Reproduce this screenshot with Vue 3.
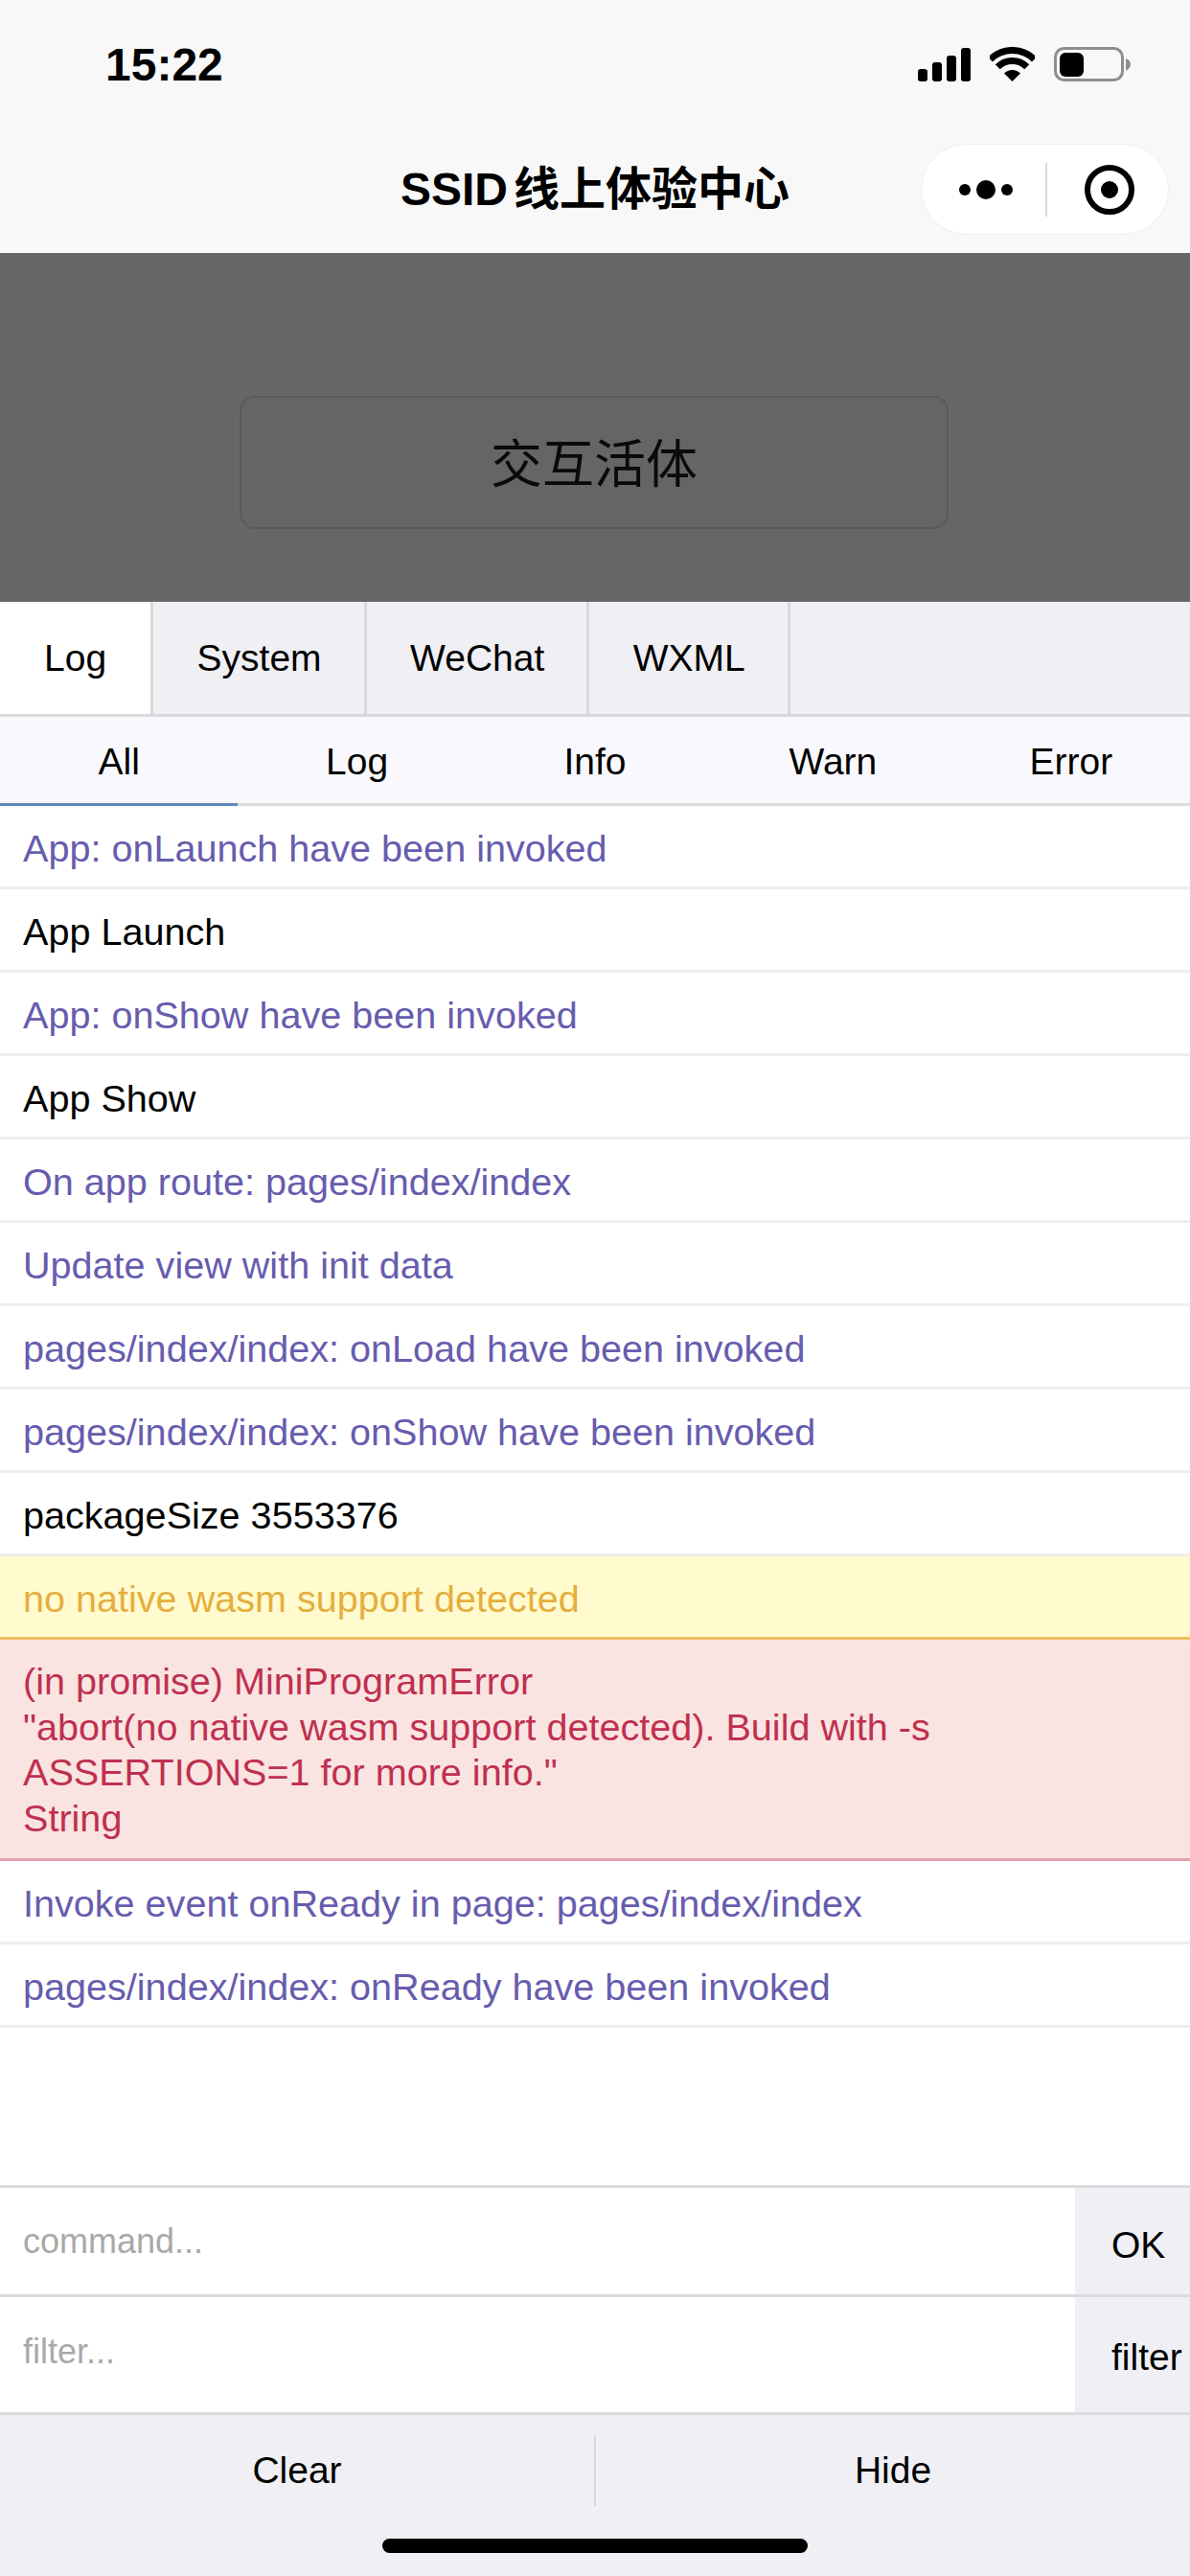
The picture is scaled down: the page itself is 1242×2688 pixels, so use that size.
<script setup>
const mainTabs = ['Log', 'System', 'WeChat', 'WXML']
const subTabs = ['All', 'Log', 'Info', 'Warn', 'Error']
const logs = [
  { kind: 'info', lines: ['App: onLaunch have been invoked'] },
  { kind: 'log', lines: ['App Launch'] },
  { kind: 'info', lines: ['App: onShow have been invoked'] },
  { kind: 'log', lines: ['App Show'] },
  { kind: 'info', lines: ['On app route: pages/index/index'] },
  { kind: 'info', lines: ['Update view with init data'] },
  { kind: 'info', lines: ['pages/index/index: onLoad have been invoked'] },
  { kind: 'info', lines: ['pages/index/index: onShow have been invoked'] },
  { kind: 'log', lines: ['packageSize 3553376'] },
  { kind: 'warn', lines: ['no native wasm support detected'] },
  {
    kind: 'error',
    lines: [
      '(in promise) MiniProgramError',
      '"abort(no native wasm support detected). Build with -s',
      'ASSERTIONS=1 for more info."',
      'String'
    ]
  },
  { kind: 'info', lines: ['Invoke event onReady in page: pages/index/index'] },
  { kind: 'info', lines: ['pages/index/index: onReady have been invoked'] }
]
</script>

<template>
  <div class="screen">
    <header class="top">
      <div class="status">
        <span class="time">15:22</span>
        <div class="status-icons">
          <svg class="signal" width="55" height="35" viewBox="0 0 55 35">
            <rect x="0" y="22" width="10" height="13" rx="3" />
            <rect x="15" y="15" width="10" height="20" rx="3" />
            <rect x="30" y="8" width="10" height="27" rx="3" />
            <rect x="45" y="0" width="10" height="35" rx="3" />
          </svg>
          <svg class="wifi" width="47" height="36" viewBox="0 0 47 36">
            <path d="M0.5 13A32.5 32.5 0 0 1 46.5 13" fill="none" stroke="#000" stroke-width="7" />
            <path d="M8.3 20.8A21.5 21.5 0 0 1 38.7 20.8" fill="none" stroke="#000" stroke-width="7" />
            <path d="M23.5 36L15 27.5A12 12 0 0 1 32 27.5Z" />
          </svg>
          <svg class="battery" width="80" height="36" viewBox="0 0 80 36">
            <rect x="1.5" y="1.5" width="70" height="33" rx="9" fill="none" stroke="#8e8e8e" stroke-width="3" />
            <rect x="6" y="6" width="25" height="25" rx="6" />
            <path d="M75 12C78 13 80 15 80 18C80 21 78 23 75 25Z" fill="#8e8e8e" />
          </svg>
        </div>
      </div>
      <div class="nav">
        <div class="title"><span class="title-latin">SSID</span>线上体验中心</div>
        <div class="capsule">
          <svg width="58" height="24" viewBox="0 0 58 24" class="dots">
            <circle cx="6" cy="12" r="6" />
            <circle cx="28" cy="12" r="10" />
            <circle cx="50" cy="12" r="6" />
          </svg>
          <span class="capsule-line"></span>
          <svg width="52" height="52" viewBox="0 0 52 52" class="target">
            <circle cx="26" cy="26" r="23" fill="none" stroke="#000" stroke-width="6" />
            <circle cx="26" cy="26" r="9" />
          </svg>
        </div>
      </div>
    </header>

    <section class="stage">
      <div class="stage-button">交互活体</div>
    </section>

    <nav class="main-tabs">
      <div v-for="(t, i) in mainTabs" :key="t" class="main-tab" :class="{ active: i === 0 }">{{ t }}</div>
    </nav>

    <nav class="sub-tabs">
      <div v-for="(t, i) in subTabs" :key="t" class="sub-tab" :class="{ active: i === 0 }">{{ t }}</div>
    </nav>

    <main class="logs">
      <div v-for="(row, i) in logs" :key="i" class="row" :class="row.kind">
        <div v-for="line in row.lines" :key="line">{{ line }}</div>
      </div>
    </main>

    <div class="cmd cmd-a">
      <div class="cmd-input">command...</div>
      <div class="cmd-btn">OK</div>
    </div>
    <div class="cmd cmd-b">
      <div class="cmd-input">filter...</div>
      <div class="cmd-btn">filter</div>
    </div>

    <footer class="footer">
      <div class="actions">
        <div class="action">Clear</div>
        <span class="action-line"></span>
        <div class="action">Hide</div>
      </div>
      <div class="home"></div>
    </footer>
  </div>
</template>

<style scoped>
.screen {
  width: 1242px;
  height: 2688px;
  display: flex;
  flex-direction: column;
  overflow: hidden;
  background: #fff;
  color: #000;
  font-family: "Liberation Sans", "Noto Sans CJK SC", sans-serif;
  font-size: 39px;
}
.top {
  height: 264px;
  flex: none;
  background: #f8f8f8;
  display: flex;
  flex-direction: column;
}
.status {
  height: 136px;
  padding: 42px 62px 0 110px;
  box-sizing: border-box;
  display: flex;
  justify-content: space-between;
  align-items: flex-start;
}
.time {
  font-size: 48px;
  font-weight: 700;
  line-height: 52px;
}
.status-icons {
  display: flex;
  align-items: flex-start;
  padding-top: 7px;
}
.signal {
  margin-top: 1px;
  margin-right: 20px;
}
.wifi {
  margin-right: 20px;
}
.nav {
  flex: 1;
  position: relative;
  display: flex;
  justify-content: center;
}
.title {
  font-size: 48px;
  font-weight: 700;
  line-height: 56px;
  margin-top: 34px;
}
.title-latin {
  margin-right: 6px;
}
.capsule {
  position: absolute;
  left: 961px;
  top: 14px;
  width: 259px;
  height: 95px;
  box-sizing: border-box;
  border: 1px solid #eeeeee;
  border-radius: 48px;
  background: #fff;
  display: flex;
  align-items: center;
}
.dots {
  margin-left: 39px;
}
.capsule-line {
  width: 2px;
  height: 56px;
  background: #d8d8d8;
  margin-left: 32px;
}
.target {
  margin-left: 39px;
}
.stage {
  height: 364px;
  flex: none;
  background: #666;
  padding: 149px 252px 0 250px;
  box-sizing: border-box;
}
.stage-button {
  height: 139px;
  box-sizing: border-box;
  border: 2px solid #5a5a5a;
  border-radius: 16px;
  background: #656565;
  font-size: 54px;
  color: #0a0a0a;
  padding-bottom: 5px;
  display: flex;
  align-items: center;
  justify-content: center;
}
.main-tabs {
  height: 120px;
  flex: none;
  display: flex;
  box-sizing: border-box;
  background: #efeff4;
  border-bottom: 3px solid #d9d9dc;
}
.main-tab {
  padding: 0 44px 0 45.5px;
  display: flex;
  align-items: center;
  border-right: 3px solid #d9d9dc;
}
.main-tab.active {
  background: #fff;
  padding: 0 46px;
}
.sub-tabs {
  height: 93px;
  flex: none;
  display: flex;
  box-sizing: border-box;
  background: #f9f9fd;
  border-bottom: 3px solid #dcdcdf;
}
.sub-tab {
  flex: 1;
  height: 93px;
  box-sizing: border-box;
  display: flex;
  align-items: center;
  justify-content: center;
}
.sub-tab.active {
  padding-top: 3px;
  border-bottom: 3px solid #5f87bd;
}
.logs {
  flex: 1;
  min-height: 0;
  font-size: 39.6px;
}
.row {
  box-sizing: border-box;
  padding: 20px 24px 16px;
  line-height: 48px;
  border-bottom: 3px solid #eeeeee;
}
.row.info {
  color: #675cae;
}
.row.log {
  color: #000;
}
.row.warn {
  background: #fffbcf;
  color: #e6ae3e;
  border-bottom-color: #ecc05e;
}
.row.error {
  background: #fae4e1;
  color: #bf3050;
  border-bottom-color: #e4a2ac;
  padding: 20px 24px 18px;
  line-height: 47.5px;
}
.cmd {
  flex: none;
  display: flex;
  box-sizing: border-box;
  border-top: 3px solid #dcdcdf;
}
.cmd-a {
  height: 114px;
}
.cmd-b {
  height: 123px;
}
.cmd-input {
  flex: 1;
  padding: 0 24px;
  font-size: 36px;
  color: #a9a9a9;
  display: flex;
  align-items: center;
}
.cmd-b .cmd-input {
  padding-bottom: 6px;
}
.cmd-btn {
  width: 120px;
  box-sizing: border-box;
  padding-left: 38px;
  white-space: nowrap;
  overflow: hidden;
  background: #efeff4;
  display: flex;
  align-items: center;
}
.cmd-a .cmd-btn {
  padding-top: 8px;
}
.cmd-b .cmd-btn {
  padding-top: 6px;
}
.footer {
  flex: none;
  height: 171px;
  box-sizing: border-box;
  background: #efeff4;
  border-top: 3px solid #dcdcdf;
  display: flex;
  flex-direction: column;
  align-items: center;
}
.actions {
  width: 100%;
  height: 116px;
  display: flex;
  align-items: center;
}
.action {
  flex: 1;
  text-align: center;
}
.action-line {
  width: 2px;
  height: 74px;
  background: #d9d9dc;
}
.home {
  width: 444px;
  height: 15px;
  margin-top: 13px;
  border-radius: 8px;
  background: #000;
}
</style>
